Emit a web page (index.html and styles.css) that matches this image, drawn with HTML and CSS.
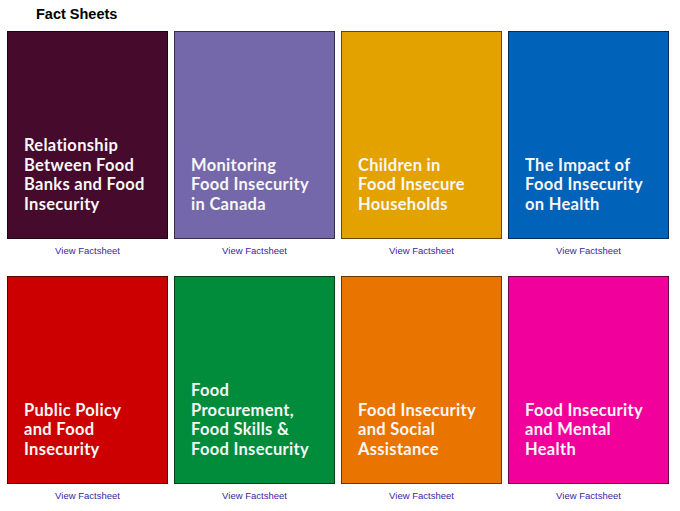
FILE: index.html
```html
<!DOCTYPE html>
<html lang="en">
<head>
<meta charset="utf-8">
<title>Fact Sheets</title>
<link rel="stylesheet" href="styles.css">
</head>
<body>
<h1 class="page-title">Fact Sheets</h1>
<div class="grid">
  <div class="item">
    <div class="card c-plum"><span class="card-title">Relationship Between Food Banks and Food Insecurity</span></div>
    <a class="link" href="#">View Factsheet</a>
  </div>
  <div class="item">
    <div class="card c-lavender"><span class="card-title">Monitoring Food Insecurity in Canada</span></div>
    <a class="link" href="#">View Factsheet</a>
  </div>
  <div class="item">
    <div class="card c-gold"><span class="card-title">Children in Food Insecure Households</span></div>
    <a class="link" href="#">View Factsheet</a>
  </div>
  <div class="item">
    <div class="card c-blue"><span class="card-title">The Impact of Food Insecurity on Health</span></div>
    <a class="link" href="#">View Factsheet</a>
  </div>
  <div class="item">
    <div class="card c-red"><span class="card-title">Public Policy and Food Insecurity</span></div>
    <a class="link" href="#">View Factsheet</a>
  </div>
  <div class="item">
    <div class="card c-green"><span class="card-title">Food Procurement, Food Skills &amp; Food Insecurity</span></div>
    <a class="link" href="#">View Factsheet</a>
  </div>
  <div class="item">
    <div class="card c-orange"><span class="card-title">Food Insecurity and Social Assistance</span></div>
    <a class="link" href="#">View Factsheet</a>
  </div>
  <div class="item">
    <div class="card c-pink"><span class="card-title">Food Insecurity and Mental Health</span></div>
    <a class="link" href="#">View Factsheet</a>
  </div>
</div>
</body>
</html>
```

FILE: styles.css
```css
html, body {
  margin: 0;
  padding: 0;
  background: #ffffff;
}

.page-title {
  margin: 0;
  padding: 5px 0 0 36px;
  height: 26px;
  font-family: "Liberation Sans", Arial, sans-serif;
  font-weight: bold;
  font-size: 14.5px;
  line-height: 18px;
  color: #000000;
}

.grid {
  display: grid;
  grid-template-columns: repeat(4, 161px);
  column-gap: 6px;
  padding-left: 7px;
}

.item {
  display: flex;
  flex-direction: column;
}

.card {
  box-sizing: border-box;
  height: 208px;
  border: 1px solid rgba(0, 0, 0, 0.55);
  display: flex;
  flex-direction: column;
  justify-content: flex-end;
  padding: 0 21px 24px 16px;
}

.card-title {
  font-family: Lato, "Open Sans", sans-serif;
  font-weight: bold;
  font-size: 16.5px;
  line-height: 19.5px;
  letter-spacing: 0.3px;
  color: #f7f7f7;
}

.link {
  display: block;
  height: 37px;
  box-sizing: border-box;
  padding-top: 6px;
  text-align: center;
  font-family: "Liberation Sans", Arial, sans-serif;
  font-size: 9.5px;
  line-height: 12px;
  color: #3b25a3;
  text-decoration: none;
}

.c-plum { background: #460a2c; }
.c-lavender { background: #7468aa; }
.c-gold { background: #e3a200; }
.c-blue { background: #0062b8; }
.c-red { background: #cc0000; }
.c-green { background: #008c3b; }
.c-orange { background: #e97400; }
.c-pink { background: #f2009b; }
```
